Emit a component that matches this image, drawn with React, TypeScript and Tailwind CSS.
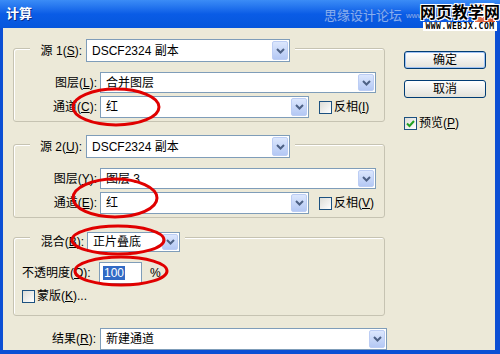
import React from 'react';

function Chevron() {
  return (
    <svg width="9" height="6" viewBox="0 0 9 6">
      <path d="M1 1l3.5 3.5L8 1" fill="none" stroke="#4d6185" strokeWidth="2" />
    </svg>
  );
}

function Combo({ value, className }: { value: string; className: string }) {
  return (
    <div className={`flex items-center border border-[#7f9db9] bg-white ${className}`}>
      <span className="flex-1 truncate pl-[5px]">{value}</span>
      <span className="m-px flex h-[calc(100%-2px)] w-[16px] items-center justify-center rounded-[2px] border border-[#bccdf4] bg-gradient-to-b from-[#dce7fd] to-[#b4c8f4]">
        <Chevron />
      </span>
    </div>
  );
}

function Check({ checked }: { checked?: boolean }) {
  return (
    <span className="flex h-[13px] w-[13px] shrink-0 items-center justify-center border border-[#1c5180] bg-gradient-to-br from-[#dcdcd7] to-white">
      {checked && (
        <svg width="9" height="9" viewBox="0 0 9 9">
          <path d="M1 4.5l2.5 2.5L8 2" fill="none" stroke="#21a121" strokeWidth="2" />
        </svg>
      )}
    </span>
  );
}

function XpButton({ label, primary }: { label: string; primary?: boolean }) {
  return (
    <div
      className={`flex h-[18px] w-[82px] items-center justify-center rounded-[3px] border border-[#003c74] bg-gradient-to-b from-white to-[#e3e2da] ${
        primary ? 'shadow-[inset_0_0_0_1px_#9fc2f4]' : ''
      }`}
    >
      {label}
    </div>
  );
}

function SourceGroup({
  n,
  k,
  layer,
  layerKey,
  channelKey,
  invertKey,
  className,
}: {
  n: string;
  k: string;
  layer: string;
  layerKey: string;
  channelKey: string;
  invertKey: string;
  className: string;
}) {
  return (
    <div className={`w-[372px] rounded-[3px] border border-[#c6c3b2] pb-[3px] shadow-[inset_1px_1px_0_#fff] ${className}`}>
      <div className="-mt-[10px] ml-[16px] flex w-fit items-center gap-[4px] bg-[#ece9d8] px-[5px]">
        <span className="w-[47px] text-right">
          源 {n}(<u>{k}</u>):
        </span>
        <Combo value="DSCF2324 副本" className="h-[23px] w-[204px]" />
      </div>
      <div className="mt-[10px] grid grid-cols-[83px_1fr] items-center gap-x-[3px] gap-y-[3px]">
        <span className="text-right">
          图层(<u>{layerKey}</u>):
        </span>
        <Combo value={layer} className="h-[21px] w-[276px]" />
        <span className="text-right">
          通道(<u>{channelKey}</u>):
        </span>
        <div className="flex items-center">
          <Combo value="红" className="h-[22px] w-[209px]" />
          <span className="ml-[10px]">
            <Check />
          </span>
          <span className="ml-[2px]">
            反相(<u>{invertKey}</u>)
          </span>
        </div>
      </div>
    </div>
  );
}

export default function App() {
  return (
    <div className="relative flex h-[354px] w-[500px] flex-col overflow-hidden bg-[#0b4fd4] font-['Liberation_Sans','Noto_Sans_CJK_SC',sans-serif] text-[12px] text-black">
      {/* title bar */}
      <div className="flex h-[28px] shrink-0 items-center bg-gradient-to-b from-[#3b8cf6] via-[#0a5ce6] to-[#0656dc] pl-[6px] pr-[4px]">
        <span className="text-[13px] font-bold text-white [text-shadow:1px_1px_0_#0a2f8c]">计算</span>
        <span className="ml-auto flex h-[22px] w-[22px] items-center justify-center rounded-[3px] border border-white bg-gradient-to-br from-[#f0906e] to-[#d24a1e]">
          <svg width="10" height="10" viewBox="0 0 10 10">
            <path d="M1.5 1.5l7 7M8.5 1.5l-7 7" stroke="#fff" strokeWidth="2" />
          </svg>
        </span>
      </div>

      {/* body */}
      <div className="mb-[5px] ml-[3px] mr-[5px] flex flex-1 bg-[#ece9d8] pl-[10px]">
        <div className="flex w-[374px] flex-col pt-[20px]">
          <SourceGroup n="1" k="S" layer="合并图层" layerKey="L" channelKey="C" invertKey="I" className="" />
          <SourceGroup n="2" k="U" layer="图层 3" layerKey="Y" channelKey="E" invertKey="V" className="mt-[22px]" />

          <div className="mt-[19px] w-[372px] rounded-[3px] border border-[#c6c3b2] pb-[10px] shadow-[inset_1px_1px_0_#fff]">
            <div className="-mt-[6px] ml-[16px] flex w-fit items-center gap-[3px] bg-[#ece9d8] px-[5px]">
              <span className="w-[49px] text-right">
                混合(<u>B</u>):
              </span>
              <Combo value="正片叠底" className="h-[20px] w-[93px]" />
            </div>
            <div className="mt-[10px] flex items-center pl-[8px]">
              <span className="w-[77px]">
                不透明度(<u>O</u>):
              </span>
              <div className="flex h-[22px] w-[43px] items-center border border-[#7f9db9] bg-white">
                <span className="ml-[3px] bg-[#316ac5] px-px leading-[14px] text-white">100</span>
              </div>
              <span className="ml-[8px]">%</span>
            </div>
            <div className="mt-[3px] flex items-center pl-[8px]">
              <Check />
              <span className="ml-[2px]">
                蒙版(<u>K</u>)...
              </span>
            </div>
          </div>

          <div className="mt-[12px] flex items-center">
            <span className="w-[83px] text-right">
              结果(<u>R</u>):
            </span>
            <Combo value="新建通道" className="ml-[4px] h-[22px] w-[287px]" />
          </div>
        </div>

        <div className="ml-[17px] flex w-[82px] flex-col pt-[23px]">
          <XpButton label="确定" primary />
          <div className="mt-[11px]">
            <XpButton label="取消" />
          </div>
          <div className="mt-[16px] flex items-center">
            <Check checked />
            <span className="ml-[2px]">
              预览(<u>P</u>)
            </span>
          </div>
        </div>
      </div>

      {/* watermark */}
      <div className="pointer-events-none absolute left-[324px] top-[6px] flex items-center text-[13px] text-[#86aef0] [text-shadow:0_0_1px_#2d5fc8]">
        思缘设计论坛
        <span className="ml-[4px] text-[8px]">www</span>
      </div>
      <div className="pointer-events-none absolute left-[420px] top-[3px] flex flex-col items-center">
        <span className="text-[16px] font-bold leading-[19px] text-black [text-shadow:1px_1px_0_#fff,-1px_-1px_0_#fff,1px_-1px_0_#fff,-1px_1px_0_#fff]">
          网页教学网
        </span>
        <span className="bg-white px-[2px] font-['DejaVu_Sans_Mono',monospace] text-[8px] font-bold leading-[9px] tracking-[0.5px]">
          WWW.WEBJX.COM
        </span>
      </div>

      {/* red annotation ovals */}
      <svg className="pointer-events-none absolute left-0 top-0" width="500" height="354">
        <g fill="none" stroke="#e00000" strokeWidth="3">
          <ellipse cx="116" cy="107" rx="43" ry="18" />
          <ellipse cx="115" cy="198" rx="42" ry="19" />
          <ellipse cx="118" cy="240" rx="46" ry="14" />
          <ellipse cx="121" cy="271" rx="46" ry="14" />
        </g>
      </svg>
    </div>
  );
}
